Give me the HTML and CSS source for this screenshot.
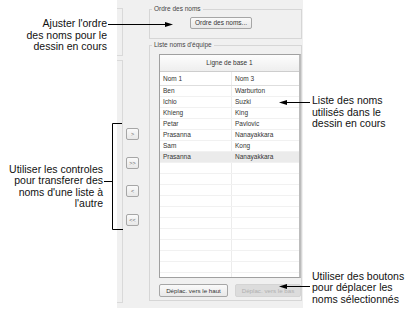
FILE: index.html
```html
<!DOCTYPE html>
<html lang="fr">
<head>
  <meta charset="UTF-8" />
  <title>Liste noms d'équipe</title>
  <link rel="stylesheet" href="styles.css">
</head>
<body>

<div class="page">

  <!-- Left callouts -->
  <div class="notes-left">
    <p class="note note-order">Ajuster l'ordre<br>des noms pour le<br>dessin en cours</p>
    <p class="note note-transfer">Utiliser les controles<br>pour transferer des<br>noms d'une liste à<br>l'autre</p>
  </div>

  <!-- Dialog crop -->
  <div class="panel">
    <div class="edge">
      <div class="edge-box edge-top"></div>
      <div class="edge-box edge-bottom"></div>
    </div>

    <div class="movers">
      <button class="mover">&gt;</button>
      <button class="mover">&gt;&gt;</button>
      <button class="mover">&lt;</button>
      <button class="mover">&lt;&lt;</button>
    </div>

    <div class="groups">
      <fieldset class="group group-order">
        <legend>Ordre des noms</legend>
        <button class="btn btn-order">Ordre des noms...</button>
      </fieldset>

      <fieldset class="group group-list">
        <legend>Liste noms d'équipe</legend>
        <div class="list">
          <div class="list-title">Ligne de base 1</div>
          <div class="list-row list-head"><span>Nom 1</span><span>Nom 3</span></div>
          <div class="list-row"><span>Ben</span><span>Warburton</span></div>
          <div class="list-row"><span>Ichio</span><span>Suzki</span></div>
          <div class="list-row"><span>Khieng</span><span>King</span></div>
          <div class="list-row"><span>Petar</span><span>Pavlovic</span></div>
          <div class="list-row"><span>Prasanna</span><span>Nanayakkara</span></div>
          <div class="list-row"><span>Sam</span><span>Kong</span></div>
          <div class="list-row selected"><span>Prasanna</span><span>Nanayakkara</span></div>
          <div class="list-row"><span></span><span></span></div>
          <div class="list-row"><span></span><span></span></div>
          <div class="list-row"><span></span><span></span></div>
          <div class="list-row"><span></span><span></span></div>
          <div class="list-row"><span></span><span></span></div>
          <div class="list-row"><span></span><span></span></div>
          <div class="list-row"><span></span><span></span></div>
          <div class="list-row"><span></span><span></span></div>
          <div class="list-row"><span></span><span></span></div>
          <div class="list-row"><span></span><span></span></div>
          <div class="list-row"><span></span><span></span></div>
        </div>
        <div class="list-actions">
          <button class="btn btn-up">Déplac. vers le haut</button>
          <button class="btn btn-down" disabled>Déplac. vers le bas</button>
        </div>
      </fieldset>
    </div>
  </div>

  <!-- Right callouts -->
  <div class="notes-right">
    <p class="note note-list">Liste des noms<br>utilisés dans le<br>dessin en cours</p>
    <p class="note note-move">Utiliser des boutons<br>pour déplacer les<br>noms sélectionnés</p>
  </div>

  <!-- Leader lines drawn over everything -->
  <svg class="leaders" width="416" height="321" viewBox="0 0 416 321">
    <g stroke="#000" stroke-width="1" fill="none">
      <path d="M108 24.5H166" />
      <path d="M310 102.5H286" />
      <path d="M310 286.5H286" />
      <path d="M122 123.5H112.5V229.5H123" />
      <path d="M104 181.5H112.5" />
    </g>
    <g fill="#000">
      <path d="M173 24.5L165 22V27Z" />
      <path d="M279 102.5L287 100V105Z" />
      <path d="M279 286.5L287 284V289Z" />
    </g>
  </svg>

</div>

</body>
</html>
```

FILE: styles.css
```css
body {
  margin: 0;
  padding: 0;
  background: white;
  font-family: "Liberation Sans", Arial, sans-serif;
}

.page {
  position: relative;
  display: flex;
  width: 416px;
  height: 321px;
  overflow: hidden;
}

/* Callout texts */
.note {
  margin: 0;
  font-size: 10.5px;
  line-height: 11.5px;
  color: #111;
}

.notes-left {
  width: 117px;
  flex: none;
}

.note-order {
  text-align: right;
  padding-right: 10px;
  margin-top: 18px;
}

.note-transfer {
  text-align: right;
  padding-right: 14px;
  margin-top: 111px;
}

.notes-right {
  flex: 1;
  padding-left: 9px;
}

.note-list {
  margin-top: 95px;
}

.note-move {
  margin-top: 141px;
}

/* Dialog */
.panel {
  width: 186px;
  height: 308px;
  flex: none;
  display: flex;
  background: #f0f0f0;
  overflow: hidden;
  font-size: 6.5px;
  color: #333;
}

.edge {
  width: 6px;
  flex: none;
}

.edge-box {
  border: 1px solid #d9d9d9;
  border-left: none;
}

.edge-top {
  margin-top: 8px;
  height: 46px;
}

.edge-bottom {
  margin-top: 4px;
  height: 241px;
}

.movers {
  width: 26px;
  flex: none;
  display: flex;
  flex-direction: column;
  align-items: flex-start;
  gap: 16.5px;
  padding-top: 128px;
  padding-left: 3px;
  box-sizing: border-box;
}

.mover, .btn {
  margin: 0;
  padding: 0;
  font-family: "Liberation Sans", Arial, sans-serif;
  font-size: 6.5px;
  color: #333;
  border: 1px solid #a6a6a6;
  border-radius: 2px;
  background: linear-gradient(#fafafa, #e8e8e8);
  box-sizing: border-box;
  white-space: nowrap;
}

.mover {
  width: 13px;
  height: 12px;
  line-height: 10px;
  font-size: 5.5px;
  color: #666;
}

.groups {
  width: 153px;
  flex: none;
}

.group {
  margin: 0;
  padding: 0;
  min-width: 0;
  border: 1px solid #d6d6d6;
}

.group legend {
  padding: 0 2px;
  margin-left: 2px;
  line-height: 8px;
  font-size: 6.5px;
  color: #444;
}

.group-order {
  margin-top: 5px;
  padding-top: 4px;
  padding-bottom: 9px;
}

.btn-order {
  display: block;
  margin-left: 40px;
  width: 62px;
  height: 12px;
  line-height: 10px;
}

.group-list {
  margin-top: 2px;
  padding-top: 5px;
  padding-bottom: 3px;
}

/* Name list */
.list {
  width: 142px;
  height: 224px;
  margin-left: 9px;
  box-sizing: border-box;
  border: 1px solid #a0a0a0;
  border-right: 2px solid #bcbcbc;
  background: white;
  overflow: hidden;
}

.list-title {
  height: 16px;
  line-height: 16px;
  text-align: center;
  background: linear-gradient(#fdfdfd, #eeeeee);
  border-bottom: 1px solid #cdcdcd;
}

.list-row {
  display: grid;
  grid-template-columns: 72px 1fr;
  height: 10px;
  line-height: 10px;
  border-bottom: 1px solid #f1f1f1;
}

.list-row span {
  padding-left: 3px;
  white-space: nowrap;
}

.list-row span:first-child {
  border-right: 1px solid #ececec;
}

.list-head {
  height: 13px;
  line-height: 13px;
  border-bottom-color: #dedede;
}

.list-row.selected {
  background: #ebebeb;
}

.list-actions {
  display: flex;
  gap: 7px;
  margin-top: 6px;
  margin-left: 9px;
}

.btn-up {
  width: 69px;
  height: 13px;
  line-height: 11px;
  font-size: 6.2px;
}

.btn-down {
  width: 66px;
  height: 13px;
  line-height: 11px;
  font-size: 6.2px;
  color: #b0b0b0;
  background: #dcdcdc;
  border-color: #d4d4d4;
}

.leaders {
  position: absolute;
  top: 0;
  left: 0;
  pointer-events: none;
}
```
